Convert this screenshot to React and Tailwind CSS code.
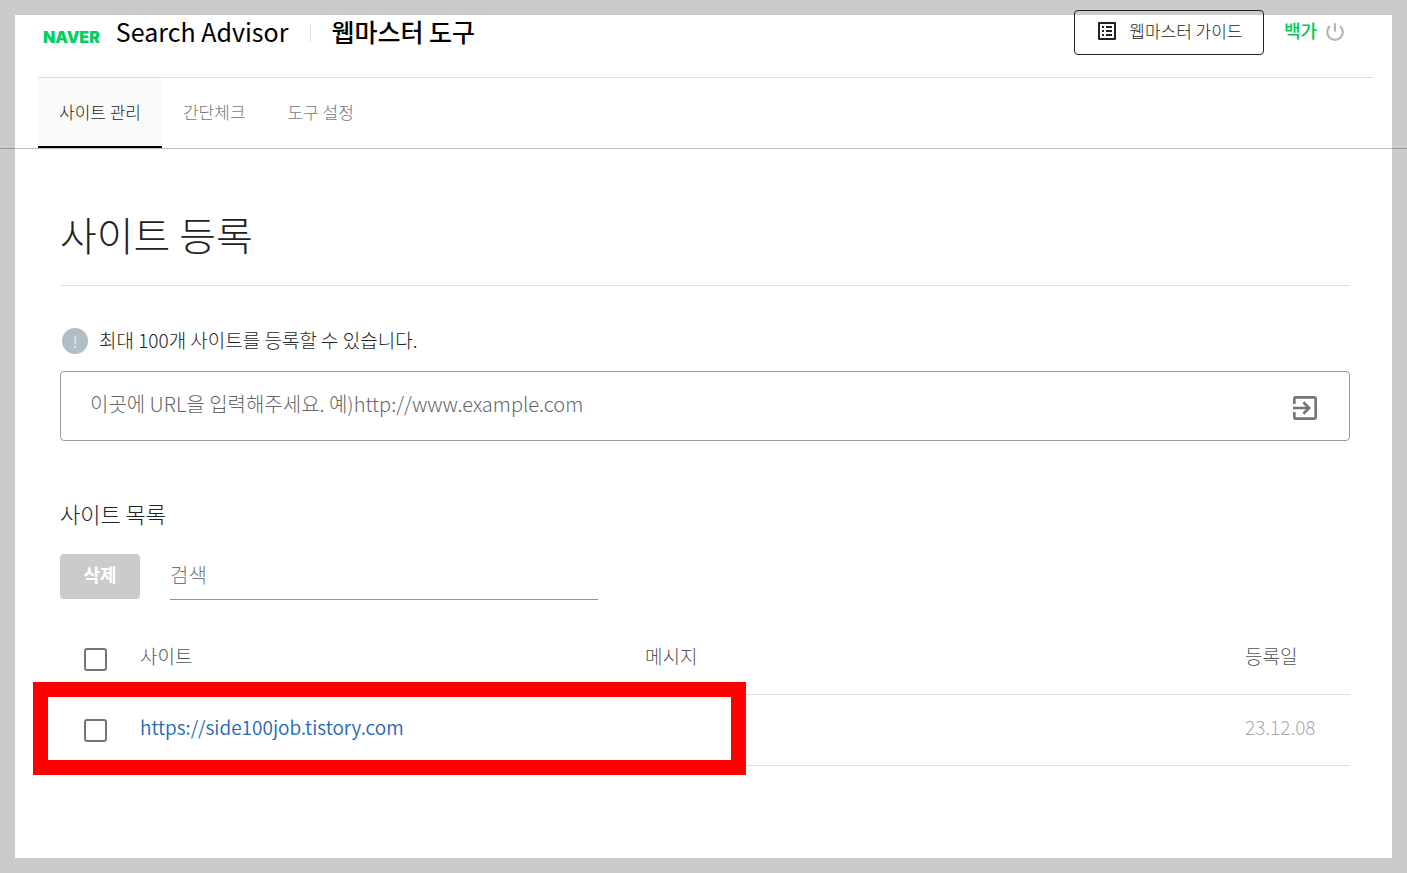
import { MdListAlt, MdExitToApp } from "react-icons/md";

const tabs = [
  { label: "사이트 관리", active: true },
  { label: "간단체크", active: false },
  { label: "도구 설정", active: false },
];

const sites = [{ url: "https://side100job.tistory.com", message: "", date: "23.12.08" }];

function PowerIcon() {
  return (
    <svg viewBox="0 0 20 20" className="size-5" fill="none" stroke="currentColor" strokeWidth="2.2">
      <path d="M10 1.2v8.4" />
      <path d="M15.1 4.2a7.8 7.8 0 1 1-10.2 0" />
    </svg>
  );
}

function Checkbox({ label }) {
  return (
    <input
      type="checkbox"
      aria-label={label}
      className="mt-1 ml-6 block size-[23px] appearance-none rounded-[3px] border-2 border-[#757575] bg-white checked:bg-[#757575]"
    />
  );
}

function Header() {
  return (
    <header className="-mt-[5px] mr-[19px] ml-[23px] flex h-[68px] items-start justify-between border-b border-[#dedede] pr-7 pl-[5px]">
      <div className="flex h-[45px] items-center">
        <a href="#" className="mt-2 mr-4 font-['Inter'] text-[16px] leading-6 font-black text-[#03cf5d]">
          NAVER
        </a>
        <a href="#" className="pb-0.5 text-[25px] text-black">
          Search Advisor
        </a>
        <span className="mr-5 ml-[22px] h-[18px] w-px bg-[#dedede]" />
        <a href="#" className="pb-0.5 text-[25px] font-medium text-black">
          웹마스터 도구
        </a>
      </div>
      <div className="flex items-start">
        <button
          type="button"
          className="mr-5 flex h-[45px] w-[190px] items-center justify-center gap-2.5 rounded-[4px] border border-[#222] pb-1 text-[17px] font-light text-[#222]"
        >
          <MdListAlt className="size-6" />
          웹마스터 가이드
        </button>
        <a href="#" className="mt-1.5 mr-2 text-[18px] leading-7 font-medium text-[#03c75a]">
          백가
        </a>
        <button type="button" aria-label="로그아웃" className="mt-3 text-[#b5b5b5]">
          <PowerIcon />
        </button>
      </div>
    </header>
  );
}

function Tabs() {
  return (
    <nav className="-mx-[15px] flex border-b border-black/25 pl-[38px] text-[17px] font-light">
      {tabs.map((tab) => (
        <a
          key={tab.label}
          href="#"
          className={
            tab.active
              ? "flex h-[70px] items-center border-b-2 border-black bg-[#fafafa] px-[21px] text-[#222]"
              : "flex h-[70px] items-center border-b-2 border-transparent px-[21px] text-[#777]"
          }
        >
          {tab.label}
        </a>
      ))}
    </nav>
  );
}

export default function App() {
  return (
    <div className="flex min-h-screen bg-[#cbcbcb] p-[15px] font-['Noto_Sans_CJK_KR','Noto_Sans',sans-serif]">
      <div className="flex min-w-0 flex-1 flex-col bg-white">
        <Header />
        <Tabs />
        <main className="mr-[42px] ml-[45px]">
          <h1 className="mt-[55px] border-b border-[#dedede] pb-[21px] text-[40px] leading-[60px] font-light text-[#222]">
            사이트 등록
          </h1>

          <p className="mt-10 flex items-center gap-[11px] pl-0.5 text-[19px] leading-[30px] font-light text-[#222]">
            <span className="flex size-[26px] items-center justify-center rounded-full bg-[#b0bec5] text-base text-white">
              !
            </span>
            <span className="pb-0.5 leading-7">최대 100개 사이트를 등록할 수 있습니다.</span>
          </p>

          <form className="mt-[15px] flex h-[70px] items-center rounded-[4px] border border-[#9a9a9a] pr-7 pl-[29px]">
            <input
              type="text"
              aria-label="사이트 URL"
              placeholder="이곳에 URL을 입력해주세요. 예)http://www.example.com"
              className="min-w-0 flex-1 pb-1 text-[20px] font-light outline-none placeholder:text-[#666]"
            />
            <button type="submit" aria-label="등록" className="mt-1 text-[#757575]">
              <MdExitToApp className="size-8" />
            </button>
          </form>

          <h2 className="mt-14 text-[22px] leading-8 font-light text-[#222]">사이트 목록</h2>

          <div className="mt-[25px] flex">
            <button
              type="button"
              disabled
              className="mr-[30px] h-[45px] w-20 rounded-[4px] bg-[#cbcbcb] pb-1 text-[18px] font-bold text-white"
            >
              삭제
            </button>
            <input
              type="search"
              aria-label="사이트 검색"
              placeholder="검색"
              className="h-[46px] w-[428px] border-b border-[#949494] pb-1 text-[20px] font-light outline-none placeholder:text-[#777]"
            />
          </div>

          <div className="relative mt-[22px]">
            <table className="w-full table-fixed text-left text-[19px] font-light">
              <colgroup>
                <col className="w-20" />
                <col className="w-[505px]" />
                <col />
                <col className="w-[105px]" />
              </colgroup>
              <thead>
                <tr className="h-[72px] border-b border-[#dedede] text-[#555]">
                  <th>
                    <Checkbox label="전체 선택" />
                  </th>
                  <th className="pb-1 font-light">사이트</th>
                  <th className="pb-1 font-light">메시지</th>
                  <th className="pb-1 font-light">등록일</th>
                </tr>
              </thead>
              <tbody>
                {sites.map((site) => (
                  <tr key={site.url} className="h-[71px] border-b border-[#dedede]">
                    <td className="pb-0.5">
                      <Checkbox label={site.url} />
                    </td>
                    <td className="pb-1">
                      <a href={site.url} className="font-[350] text-[#2269b3]">
                        {site.url}
                      </a>
                    </td>
                    <td>{site.message}</td>
                    <td className="pb-1 text-[#aaa]">{site.date}</td>
                  </tr>
                ))}
              </tbody>
            </table>
            <div className="pointer-events-none absolute -bottom-[9px] -left-[27px] h-[93px] w-[713px] border-[15px] border-[#ff0000]" />
          </div>
        </main>
      </div>
    </div>
  );
}
